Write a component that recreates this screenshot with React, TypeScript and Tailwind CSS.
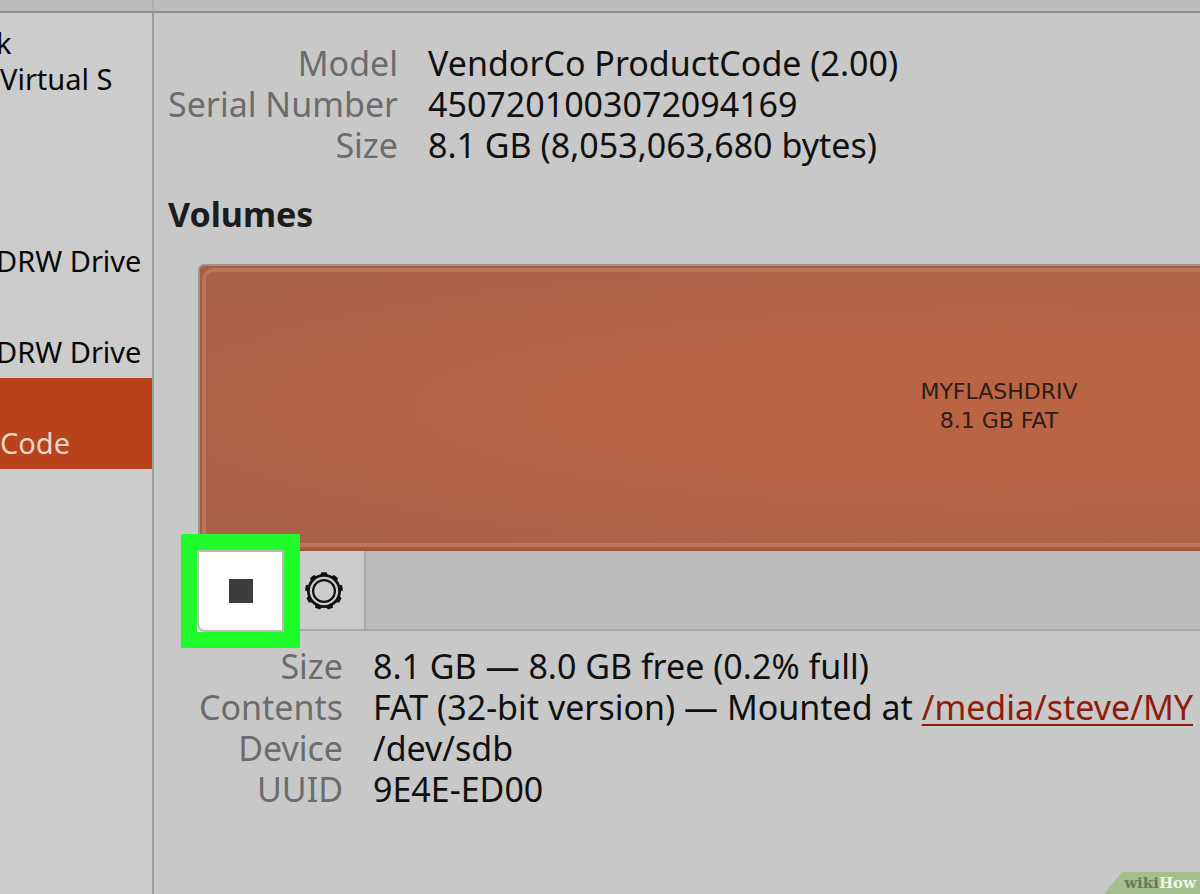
import React from "react";

const drives = [
  { line: "k", top: true },
  { line: "", top: false },
  { line: "DRW Drive", top: false },
  { line: "DRW Drive", top: false },
];

function Gear() {
  return (
    <svg viewBox="0 0 40 40" className="size-10" fill="none" stroke="#111" aria-hidden="true">
      {[0, 40, 80, 120, 160, 200, 240, 280, 320].map((a) => (
        <path key={a} d="M16.4 4.2 17.4 1.2H22.6L23.6 4.2Z" fill="#111" stroke="none" transform={`rotate(${a} 20 20)`} />
      ))}
      <circle cx="20" cy="20" r="15.6" strokeWidth="2.8" />
      <circle cx="20" cy="20" r="10.9" strokeWidth="2.2" />
    </svg>
  );
}

function Row({ label, children }: { label: string; children: React.ReactNode }) {
  return (
    <>
      <dt className="text-right text-[#6c6c6c]">{label}</dt>
      <dd className="text-[#101010]">{children}</dd>
    </>
  );
}

export default function App() {
  return (
    <div className="relative flex min-h-screen flex-col overflow-hidden bg-[#c8c8c8] font-['Noto_Sans',sans-serif]">
      <header className="flex h-[13px] border-b-2 border-[#8f8f8f] bg-[#bcbcbc]">
        <div className="w-[154px] border-r-2 border-[#acacac]" />
      </header>
      <div className="flex flex-1">
        <nav className="w-[154px] shrink-0 overflow-hidden border-r-2 border-[#9c9c9c] bg-[#cccccc] pt-px text-[29px] leading-9 whitespace-nowrap text-[#080808]">
          <ul>
            {drives.map((d, i) => (
              <li key={i} className="h-[91px] pt-[11px]">
                {d.top ? (
                  <>
                    <div className="-ml-1 h-9">{d.line}</div>
                    <div>Virtual S</div>
                  </>
                ) : (
                  <div className="-ml-1 pt-9">{d.line}</div>
                )}
              </li>
            ))}
            <li className="h-[91px] bg-[#b84219] pt-[47px] text-[#ecd5cc]">Code</li>
          </ul>
        </nav>
        <main className="min-w-0 flex-1 overflow-hidden pt-[30px] pl-[14px] text-[34px] leading-[41px] whitespace-nowrap">
          <dl className="grid grid-cols-[230px_1fr] gap-x-[30px]">
            <Row label="Model">VendorCo ProductCode (2.00)</Row>
            <Row label="Serial Number">4507201003072094169</Row>
            <Row label="Size">8.1 GB (8,053,063,680 bytes)</Row>
          </dl>
          <h2 className="mt-7 font-bold text-[#1c1c1c]">Volumes</h2>
          <section className="mt-[29px] ml-[30px]">
            <div className="h-[287px] rounded-tl-md border-t-2 border-b-2 border-l-2 border-t-[#969696] border-b-[#985743] border-l-[#969696] bg-[#ad5a3f] pt-[2px] pb-[2px] pl-[2px]">
              <div className="flex h-full flex-col justify-center rounded-tl-[12px] border-y-4 border-l-4 border-[#bd745c] bg-[radial-gradient(ellipse_at_800px_50%,#bb6545_0%,#b76344_30%,#ae6147_75%,#a96148_100%)] pb-1 pl-[590px] font-['DejaVu_Sans',sans-serif] text-[22px] leading-[29px] text-[#2e1d17]">
                <div className="w-[406px] text-center">
                  <div>MYFLASHDRIV</div>
                  <div>8.1 GB FAT</div>
                </div>
              </div>
            </div>
            <div className="flex h-20 border-b-2 border-[#a8a8a8] bg-[#bbbbbb]">
              <div className="relative w-[86px]">
                <button
                  type="button"
                  aria-label="Unmount"
                  className="absolute -top-[17px] -left-[17px] flex h-[114px] w-[119px] items-center justify-center border-[16px] border-[#20fb2c] bg-white"
                >
                  <span className="flex h-full w-full items-center justify-center rounded-bl-lg border-2 border-[#b9b9b9] bg-white">
                    <span className="size-6 bg-[#3c3c3c]" />
                  </span>
                </button>
              </div>
              <button
                type="button"
                aria-label="Additional options"
                className="flex w-[82px] items-center justify-center border-r-2 border-[#a8a8a8] bg-[#cccccc] pt-[2px]"
              >
                <Gear />
              </button>
            </div>
          </section>
          <dl className="mt-[15px] grid grid-cols-[175px_1fr] gap-x-[30px]">
            <Row label="Size">8.1 GB — 8.0 GB free (0.2% full)</Row>
            <Row label="Contents">
              FAT (32-bit version) — Mounted at{" "}
              <a href="#media" className="text-[#8e1b0c] underline decoration-2 underline-offset-4">
                /media/steve/MY
              </a>
            </Row>
            <Row label="Device">/dev/sdb</Row>
            <Row label="UUID">9E4E-ED00</Row>
          </dl>
        </main>
      </div>
      <div className="absolute right-0 bottom-0 flex h-[22px] w-[96px] items-center justify-end bg-[#a3bf8b] pr-1 font-['DejaVu_Serif',serif] text-[15px] font-bold text-[#667a58] [clip-path:polygon(18px_0,100%_0,100%_100%,0_100%)]">
        wiki<span className="text-[#f2f5ee]">How</span>
      </div>
    </div>
  );
}
